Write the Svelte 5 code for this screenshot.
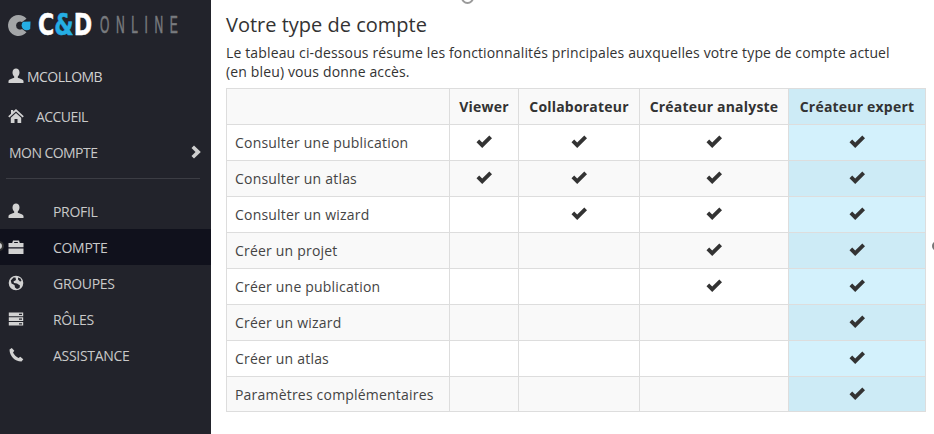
<script>
	const columns = ['Viewer', 'Collaborateur', 'Créateur analyste', 'Créateur expert'];
	const rows = [
		{ label: 'Consulter une publication', level: 0 },
		{ label: 'Consulter un atlas', level: 0 },
		{ label: 'Consulter un wizard', level: 1 },
		{ label: 'Créer un projet', level: 2 },
		{ label: 'Créer une publication', level: 2 },
		{ label: 'Créer un wizard', level: 3 },
		{ label: 'Créer un atlas', level: 3 },
		{ label: 'Paramètres complémentaires', level: 3 }
	];
	const menu = [
		{ label: 'PROFIL', icon: 'user' },
		{ label: 'COMPTE', icon: 'briefcase', active: true },
		{ label: 'GROUPES', icon: 'globe' },
		{ label: 'RÔLES', icon: 'server' },
		{ label: 'ASSISTANCE', icon: 'phone' }
	];
</script>

{#snippet icon(name)}
	<svg class="icon" viewBox="0 0 16 16" aria-hidden="true">
		{#if name === 'user'}
			<path d="M4.500 4.500C4.500 1.800 6 .5 8 .5s3.500 1.300 3.500 4c0 1.700-.7 3.200-1.700 4v1.300c1.200.8 5.200 1.200 5.700 3.200v2H.5v-2c.5-2 4.500-2.400 5.700-3.200V8.500c-1-.8-1.700-2.300-1.700-4z" />
		{:else if name === 'briefcase'}
			<path fill-rule="evenodd" d="M5 1.500h6L11.800 4H15.500v4.300H.5V4h3.700zM6 3.900h4l-.3-1H6.300zM.5 9.500h15V15H.5z" />
		{:else if name === 'globe'}
			<path fill-rule="evenodd" d="M8 .7a7.300 7.300 0 1 1 0 14.600A7.300 7.300 0 0 1 8 .7zM5.500 2.500 2.800 5.500l.7 3 3 1.500.5 2.500 2 1.500 2.500-1 .5-2.500-3-2-3-.5-.5-1.500L8 5 7.500 2.500zM10 2.500v2l2 2 1.500-.5-1-2.500z" />
		{:else if name === 'server'}
			<path fill-rule="evenodd" d="M.8 1.500h14.400v3.700H.8zM.8 6.200h14.400v3.700H.8zM.8 10.900h14.400v3.700H.8zM11 2.800v1.200h3V2.800zM11 7.500v1.200h3V7.500zM11 12.200v1.200h3v-1.200z" />
		{:else if name === 'phone'}
			<path d="M3.800 1 1.500 2.500C1.500 6 3 9 5 11s5 3.500 8.500 3.500l1.800-2.300-3-2.500-1.800 1.300C8.500 10.200 5.800 7.500 5 5.500l1.300-1.700z" />
		{:else if name === 'home'}
			<path d="M8 1 15.800 8.300 14.600 9.500 8 3.400 1.400 9.500.2 8.300 3 5.700V2h2.200v1.600zM2.800 9.700 8 4.900l5.200 4.800V15H9.500v-4h-3v4H2.800z" />
		{/if}
	</svg>
{/snippet}

<div class="page">
	<aside class="sidebar">
		<div class="logo">
			<svg class="logo-mark" viewBox="0 0 24 21" aria-hidden="true">
				<path d="M10.500 0a10.500 10.500 0 0 1 8 3.700L14 7a4 4 0 1 0 0 7l4.500 3.300A10.500 10.500 0 1 1 10.500 0z" fill="#a3a5a7" />
				<path d="M19 5l5 5.500a5 5 0 1 1-10 0z" fill="#25aee4" transform="rotate(45 19 10)" />
			</svg>
			<span class="logo-c">C<span class="logo-amp">&amp;</span>D</span>
			<span class="logo-online">ONLINE</span>
		</div>

		<div class="account">
			{@render icon('user')}
			<span>MCOLLOMB</span>
		</div>
		<div class="home">
			{@render icon('home')}
			<span>ACCUEIL</span>
		</div>
		<div class="section">
			<span>MON COMPTE</span>
			<svg class="chevron" viewBox="0 0 10 14" aria-hidden="true">
				<path d="M3 .5 9.800 7 3 13.500 .5 11 4.500 7 .5 3z" />
			</svg>
		</div>
		<div class="divider"></div>

		<nav class="menu">
			{#each menu as item}
				<div class="menu-item" class:active={item.active}>
					{@render icon(item.icon)}
					<span>{item.label}</span>
				</div>
			{/each}
		</nav>
	</aside>

	<main class="content">
		<h1>Votre type de compte</h1>
		<p>Le tableau ci-dessous résume les fonctionnalités principales auxquelles votre type de compte actuel (en bleu) vous donne accès.</p>

		<table>
			<thead>
				<tr>
					<th></th>
					{#each columns as col, i}
						<th class:current={i === 3}>{col}</th>
					{/each}
				</tr>
			</thead>
			<tbody>
				{#each rows as row}
					<tr>
						<td class="label">{row.label}</td>
						{#each columns as col, i}
							<td class="cell" class:current={i === 3}>
								{#if i >= row.level}
									<svg class="check" viewBox="0 0 16 13" aria-hidden="true">
										<path d="M13.300.5 16 3.200 6.200 13 .5 7.300l2.700-2.700 3 3z" />
									</svg>
								{/if}
							</td>
						{/each}
					</tr>
				{/each}
			</tbody>
		</table>
	</main>

	<span class="dot dot-top"></span>
	<span class="dot dot-left"></span>
	<span class="dot dot-right"></span>
</div>

<style>
	:global(body) {
		margin: 0;
		background: #fff;
	}

	.page {
		position: relative;
		display: flex;
		width: 934px;
		height: 434px;
		overflow: hidden;
		font-family: 'Open Sans', sans-serif;
		color: #333;
	}

	.sidebar {
		flex: 0 0 211px;
		min-width: 0;
		display: flex;
		flex-direction: column;
		background: #22232b;
		color: #c9c9c9;
		font-size: 14px;
		letter-spacing: -0.55px;
	}

	.icon {
		width: 16px;
		height: 16px;
		fill: #d2d2d2;
		flex: none;
	}

	.logo {
		display: flex;
		align-items: center;
		height: 50px;
		padding-left: 8px;
		letter-spacing: 0;
	}

	.logo-mark {
		width: 24px;
		height: 21px;
		margin-right: 6px;
		overflow: visible;
	}

	.logo-c {
		font-family: 'DejaVu Sans', sans-serif;
		font-weight: 700;
		font-size: 30px;
		line-height: 30px;
		color: #fff;
		-webkit-text-stroke: 0.5px currentColor;
		transform: scaleX(0.74);
		transform-origin: left center;
		width: 62px;
		flex: none;
		white-space: nowrap;
	}

	.logo-amp {
		color: #25aee4;
	}

	.logo-online {
		font-family: 'Liberation Sans', sans-serif;
		font-size: 24px;
		line-height: 30px;
		letter-spacing: 13.2px;
		color: #797b7f;
		-webkit-text-stroke: 0.6px currentColor;
		transform: scaleX(0.5);
		transform-origin: left center;
		white-space: nowrap;
		width: 80px;
		flex: none;
	}

	.account {
		display: flex;
		align-items: center;
		gap: 3px;
		height: 36px;
		margin-top: 8px;
		padding-left: 8px;
		color: #d0d0d0;
	}

	.home {
		display: flex;
		align-items: center;
		gap: 12px;
		height: 36px;
		margin-top: 4px;
		padding-left: 8px;
	}

	.section {
		display: flex;
		align-items: center;
		justify-content: space-between;
		height: 36px;
		padding: 0 10px 0 9px;
	}

	.chevron {
		width: 10px;
		height: 14px;
		fill: #cfcfcf;
	}

	.divider {
		height: 1px;
		margin: 8px 11px 0 6px;
		background: #3c3d44;
	}

	.menu {
		display: flex;
		flex-direction: column;
		margin-top: 14px;
		letter-spacing: -0.3px;
	}

	.menu-item {
		display: flex;
		align-items: center;
		gap: 29px;
		height: 36px;
		padding-left: 8px;
	}

	.menu-item.active {
		background: #10111c;
	}

	.content {
		flex: 1;
		padding: 12px 9px 0 15px;
		min-width: 0;
	}

	h1 {
		margin: 0 0 5px;
		font-size: 20px;
		font-weight: 500;
		line-height: 26px;
		color: #333;
	}

	p {
		margin: 0 0 7px;
		max-width: 670px;
		font-size: 14px;
		line-height: 19px;
		letter-spacing: 0.14px;
		color: #333;
	}

	table {
		width: 700px;
		border-collapse: collapse;
		table-layout: fixed;
		font-size: 14px;
	}

	th, td {
		border: 1px solid #ddd;
		padding: 0;
		height: 35px;
	}

	th {
		background: #f9f9f9;
		font-weight: 700;
		letter-spacing: 0.2px;
		text-align: center;
		color: #333;
	}

	th:nth-child(1) { width: 222px; }
	th:nth-child(2) { width: 68px; }
	th:nth-child(3) { width: 120px; }
	th:nth-child(4) { width: 148px; }

	tbody tr:nth-child(even) td {
		background: #f9f9f9;
	}

	tbody tr:nth-child(8) td {
		height: 34px;
	}

	.label {
		padding-left: 8px;
		letter-spacing: 0.2px;
		color: #444;
	}

	.cell {
		text-align: center;
		line-height: 0;
	}

	th.current,
	tbody tr:nth-child(even) td.current {
		background: #cdebf6;
	}

	td.current {
		background: #d3f1fc;
	}

	.check {
		width: 16px;
		height: 13px;
		fill: #333;
		position: relative;
		top: -1px;
	}

	.dot {
		position: absolute;
		border-radius: 50%;
		box-sizing: border-box;
	}

	.dot-top {
		left: 461px;
		top: -9px;
		width: 13px;
		height: 13px;
		border: 2px solid #9a9a9a;
	}

	.dot-left {
		left: -6px;
		top: 241px;
		width: 10px;
		height: 10px;
		background: #d0d0d0;
		border: 2px solid #333;
	}

	.dot-right {
		left: 932px;
		top: 241px;
		width: 10px;
		height: 10px;
		border: 2px solid #777;
	}
</style>
